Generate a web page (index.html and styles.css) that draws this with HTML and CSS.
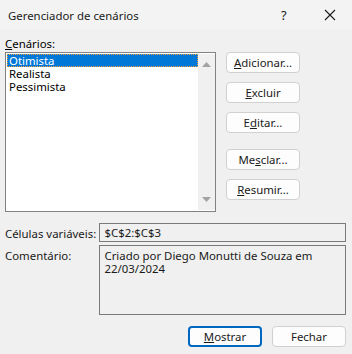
FILE: index.html
```html
<!DOCTYPE html>
<html lang="pt-BR">
<head>
  <meta charset="UTF-8" />
  <title>Gerenciador de cenários</title>
  <link rel="stylesheet" href="styles.css">
</head>
<body>
  <div class="dialog">
    <div class="titlebar">
      <span class="title">Gerenciador de cenários</span>
      <span class="help">?</span>
      <span class="close">
        <svg width="12" height="12" viewBox="0 0 12 12"><path d="M1 1L11 11M11 1L1 11" stroke="#1a1a1a" stroke-width="1.1" fill="none"/></svg>
      </span>
    </div>
    <div class="content">
      <div class="label"><u>C</u>enários:</div>
      <div class="main">
        <div class="listbox">
          <ul class="items">
            <li class="selected">Otimista</li>
            <li>Realista</li>
            <li>Pessimista</li>
          </ul>
          <div class="scrollbar">
            <svg width="9" height="5" viewBox="0 0 9 5"><path d="M4.5 0L9 5H0z" fill="#a3a3a3"/></svg>
            <svg width="9" height="5" viewBox="0 0 9 5"><path d="M0 0H9L4.5 5z" fill="#a3a3a3"/></svg>
          </div>
        </div>
        <div class="side">
          <button class="btn"><u>A</u>dicionar...</button>
          <button class="btn"><u>E</u>xcluir</button>
          <button class="btn">E<u>d</u>itar...</button>
          <button class="btn gap">Me<u>s</u>clar...</button>
          <button class="btn"><u>R</u>esumir...</button>
        </div>
      </div>
      <div class="row first">
        <span class="rlabel">Células variáveis:</span>
        <div class="field">$C$2:$C$3</div>
      </div>
      <div class="row">
        <span class="rlabel">Comentário:</span>
        <div class="field comment">Criado por Diego Monutti de Souza em 22/03/2024</div>
      </div>
      <div class="footer">
        <button class="btn default"><u>M</u>ostrar</button>
        <button class="btn">Fechar</button>
      </div>
    </div>
  </div>
</body>
</html>
```

FILE: styles.css
```css
body {
  margin: 0;
  background: #f0f0f0;
  font-family: "Noto Sans", sans-serif;
  font-size: 11.4px;
  color: #000;
}
.dialog {
  width: 352px;
  height: 354px;
  overflow: hidden;
}
.titlebar {
  height: 30px;
  background: #f3f3f3;
  display: flex;
  align-items: center;
  padding-left: 8px;
}
.title {
  flex: 1;
  color: #1a1a1a;
}
.help {
  width: 12px;
  margin-right: 31px;
  font-size: 13px;
  color: #1a1a1a;
}
.close {
  width: 12px;
  height: 12px;
  margin-right: 16px;
  display: flex;
}
.content {
  padding: 0 6px 0 5px;
}
.label {
  margin-top: 6px;
  height: 16px;
  line-height: 16px;
}
.main {
  display: flex;
}
.listbox {
  width: 209px;
  height: 158px;
  border: 1px solid #828282;
  background: #fff;
  display: flex;
}
.items {
  list-style: none;
  margin: 0;
  padding: 1px 0 0 1px;
  flex: 1;
}
.items li {
  height: 13px;
  line-height: 13px;
  padding-left: 2px;
}
.items li.selected {
  background: #0078d7;
  color: #fff;
  outline: 1px dotted #f3a03a;
  outline-offset: -1px;
}
.scrollbar {
  width: 17px;
  background: #f0f0f0;
  display: flex;
  flex-direction: column;
  justify-content: space-between;
  align-items: center;
  padding: 8px 0;
  margin: 1px 0;
}
.side {
  display: flex;
  flex-direction: column;
  margin-left: 10px;
}
.btn {
  width: 74px;
  height: 21px;
  margin-bottom: 9px;
  padding: 0;
  background: #fdfdfd;
  border: 1px solid #d0d0d0;
  border-radius: 4px;
  font-family: "Noto Sans", sans-serif;
  font-size: 11.4px;
  color: #1a1a1a;
}
.btn.gap {
  margin-top: 7px;
}
.row {
  display: flex;
  margin-top: 3px;
}
.row.first {
  margin-top: 11px;
}
.rlabel {
  width: 95px;
  padding-top: 3px;
  white-space: nowrap;
  color: #1a1a1a;
}
.field {
  width: 242px;
  height: 16px;
  border: 1px solid #7a7a7a;
  padding: 1px 0 0 4px;
  line-height: 15px;
  color: #1a1a1a;
}
.field.comment {
  height: 65px;
  padding-top: 3px;
  line-height: 13px;
}
.footer {
  display: flex;
  justify-content: flex-end;
  gap: 10px;
  margin-top: 11px;
}
.footer .btn {
  margin: 0;
}
.btn.default {
  border: 2px solid #0067c0;
}
```
